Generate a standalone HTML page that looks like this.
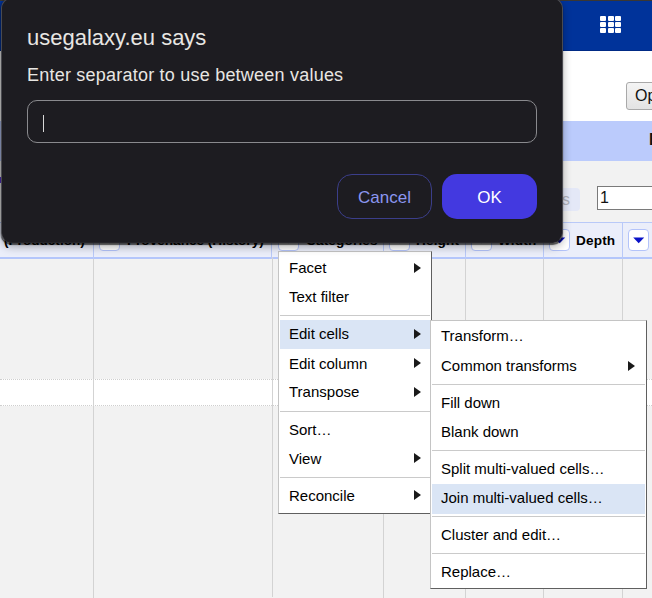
<!DOCTYPE html>
<html><head><meta charset="utf-8">
<style>
*{margin:0;padding:0;box-sizing:border-box}
html,body{width:652px;height:598px;overflow:hidden;background:#f2f2f2;font-family:"Liberation Sans",sans-serif;position:relative}
.a{position:absolute;white-space:nowrap}
#topline{left:0;top:0;width:652px;height:1px;background:#3a3733}
#nav{left:0;top:1px;width:652px;height:50px;background:#00339a;border-bottom:1px solid #002a85}
#white{left:0;top:51px;width:652px;height:70px;background:#fff}
#band{left:0;top:121px;width:652px;height:40px;background:#bbcbfc}
#grey{left:0;top:161px;width:652px;height:61px;background:#f2f2f2}
.gsq{position:absolute;width:6px;height:5px;background:#fff;border-radius:1px}
#opbtn{left:626px;top:82px;width:60px;height:28px;border:1px solid #a9a9a9;border-radius:3px;background:linear-gradient(#f4f4f4,#e3e3e3);font-size:16px;line-height:26px;padding-left:8px;color:#111}
#badge{left:540px;top:188px;width:40px;height:23px;background:#e4e8f7;border-radius:4px;color:#b0b3bd;font-size:16px;line-height:23px;padding-left:22px}
#num{left:597px;top:186px;width:80px;height:24px;background:#fff;border:1px solid #7a7a7a;font-size:16px;line-height:22px;padding-left:2px;color:#111}
#hdr{left:0;top:222px;width:652px;height:37px;background:#ebeefa;border-top:1px solid #b9c9f8;border-bottom:2px solid #b4c6fb}
.hcol{position:absolute;top:222px;width:1px;height:37px;background:#b9c9f8}
.bcol{position:absolute;top:259px;width:1px;height:340px;background:#d3d3d3}
.cb{position:absolute;top:229px;width:21px;height:22px;background:#fff;border:1.5px solid #b3c3fa;border-radius:4px}
.cb svg{position:absolute;left:3.5px;top:6px;width:12px;height:8px}
.ht{position:absolute;top:234px;font-size:13.6px;font-weight:bold;line-height:14px;color:#000;letter-spacing:0.15px}
#wrow{left:0;top:379px;width:652px;height:27px;background:#fff;border-top:1px dotted #cfcfcf;border-bottom:1px dotted #cfcfcf}
.menu{position:absolute;background:#fff;border:1px solid #c4c4c4;border-right-color:#5f5f5f;border-bottom-color:#5f5f5f}
.mi{position:absolute;font-size:15px;line-height:15px;color:#000}
.sep{position:absolute;height:1px;background:#cacaca}
.hl{position:absolute;background:#dae5f5}
.arr{position:absolute;width:0;height:0;border-top:5.5px solid transparent;border-bottom:5.5px solid transparent;border-left:7px solid #1a1a1a}
#shadow{left:1px;top:-2px;width:562px;height:245px;border-radius:10px;box-shadow:0 2px 1px rgba(0,0,0,.6),0 4px 9px rgba(0,0,0,.3),-1px 0 2px rgba(0,0,0,.3)}
#dlg{left:1px;top:-2px;width:562px;height:245px;background:#1d1c21;border:1px solid #4a4a50;border-bottom-color:#26252a;border-radius:10px}
.dt{position:absolute;color:#e8e6e3}
#inp{left:27px;top:100px;width:510px;height:43px;border:1.5px solid #8a8a8e;border-radius:10px}
#caret{left:43.2px;top:115px;width:1.3px;height:17px;background:#d8d8d8}
#cancel{left:337px;top:174px;width:95px;height:45px;border:1px solid #3b3e8a;border-radius:15px;color:#8b96f0;font-size:17px;text-align:center;line-height:45px}
#ok{left:442px;top:174px;width:95px;height:45px;background:#4339e0;border-radius:15px;color:#fff;font-size:17px;text-align:center;line-height:47px}
</style></head><body>
<div class="a" id="topline"></div>
<div class="a" id="nav">
  <div class="gsq" style="left:600px;top:15px"></div><div class="gsq" style="left:608px;top:15px"></div><div class="gsq" style="left:615px;top:15px"></div>
  <div class="gsq" style="left:600px;top:21px"></div><div class="gsq" style="left:608px;top:21px"></div><div class="gsq" style="left:615px;top:21px"></div>
  <div class="gsq" style="left:600px;top:27px"></div><div class="gsq" style="left:608px;top:27px"></div><div class="gsq" style="left:615px;top:27px"></div>
</div>
<div class="a" id="white"></div>
<div class="a" id="opbtn">Options</div>
<div class="a" id="band"><span style="position:absolute;left:649px;top:10px;font-weight:bold;font-size:16px;color:#111">E</span></div>
<div class="a" id="grey"></div>
<div class="a" style="left:0;top:177px;width:2px;height:6px;background:#5b35d5"></div>
<div class="a" id="badge">s</div>
<div class="a" id="num">1</div>

<div class="a" id="hdr"></div>
<div class="hcol" style="left:93px"></div>
<div class="hcol" style="left:271px"></div>
<div class="hcol" style="left:383px"></div>
<div class="hcol" style="left:465px"></div>
<div class="hcol" style="left:543px"></div>
<div class="hcol" style="left:622px"></div>
<div class="cb" style="left:99px"><svg viewBox="0 0 12 8"><path d="M0.2 1.6 L11.2 1.6 L5.7 7.3 Z" fill="#0a12c8"/></svg></div>
<div class="cb" style="left:278px"><svg viewBox="0 0 12 8"><path d="M0.2 1.6 L11.2 1.6 L5.7 7.3 Z" fill="#0a12c8"/></svg></div>
<div class="cb" style="left:389px"><svg viewBox="0 0 12 8"><path d="M0.2 1.6 L11.2 1.6 L5.7 7.3 Z" fill="#0a12c8"/></svg></div>
<div class="cb" style="left:471px"><svg viewBox="0 0 12 8"><path d="M0.2 1.6 L11.2 1.6 L5.7 7.3 Z" fill="#0a12c8"/></svg></div>
<div class="cb" style="left:549px"><svg viewBox="0 0 12 8"><path d="M0.2 1.6 L11.2 1.6 L5.7 7.3 Z" fill="#0a12c8"/></svg></div>
<div class="cb" style="left:628px"><svg viewBox="0 0 12 8"><path d="M0.2 1.6 L11.2 1.6 L5.7 7.3 Z" fill="#0a12c8"/></svg></div>
<div class="ht" style="left:4px;letter-spacing:0">(Production)</div>
<div class="ht" style="left:127px;letter-spacing:0">Provenance (History)</div>
<div class="ht" style="left:306px">Categories</div>
<div class="ht" style="left:416px">Height</div>
<div class="ht" style="left:498px">Width</div>
<div class="ht" style="left:576px">Depth</div>

<div class="a" id="wrow"></div>
<div class="bcol" style="left:93px"></div>
<div class="bcol" style="left:272px;top:257px"></div>
<div class="bcol" style="left:383px"></div>
<div class="bcol" style="left:465px"></div>
<div class="bcol" style="left:543px"></div>
<div class="bcol" style="left:622px"></div>

<!-- menu 1 -->
<div class="menu" style="left:278px;top:251px;width:154px;height:263px"></div>
<div class="hl" style="left:280px;top:320px;width:150px;height:29px"></div>
<div class="sep" style="left:280px;top:315px;width:150px"></div>
<div class="sep" style="left:280px;top:411px;width:150px"></div>
<div class="sep" style="left:280px;top:477px;width:150px"></div>
<div class="mi" style="left:289px;top:260px">Facet</div>
<div class="mi" style="left:289px;top:289px">Text filter</div>
<div class="mi" style="left:289px;top:326px">Edit cells</div>
<div class="mi" style="left:289px;top:356px">Edit column</div>
<div class="mi" style="left:289px;top:384px">Transpose</div>
<div class="mi" style="left:289px;top:422px">Sort…</div>
<div class="mi" style="left:289px;top:451px">View</div>
<div class="mi" style="left:289px;top:488px">Reconcile</div>
<div class="arr" style="left:414px;top:263px"></div>
<div class="arr" style="left:414px;top:329px"></div>
<div class="arr" style="left:414px;top:358px"></div>
<div class="arr" style="left:414px;top:387px"></div>
<div class="arr" style="left:414px;top:453px"></div>
<div class="arr" style="left:414px;top:490px"></div>

<!-- submenu -->
<div class="menu" style="left:430px;top:320px;width:217px;height:269px"></div>
<div class="hl" style="left:432px;top:484px;width:213px;height:30px"></div>
<div class="sep" style="left:432px;top:384px;width:213px"></div>
<div class="sep" style="left:432px;top:450px;width:213px"></div>
<div class="sep" style="left:432px;top:516px;width:213px"></div>
<div class="sep" style="left:432px;top:553px;width:213px"></div>
<div class="mi" style="left:441px;top:328px">Transform…</div>
<div class="mi" style="left:441px;top:358px">Common transforms</div>
<div class="mi" style="left:441px;top:395px">Fill down</div>
<div class="mi" style="left:441px;top:424px">Blank down</div>
<div class="mi" style="left:441px;top:461px">Split multi-valued cells…</div>
<div class="mi" style="left:441px;top:490px">Join multi-valued cells…</div>
<div class="mi" style="left:441px;top:527px">Cluster and edit…</div>
<div class="mi" style="left:441px;top:564px">Replace…</div>
<div class="arr" style="left:628px;top:361px"></div>

<!-- dialog -->
<div class="a" id="shadow"></div>
<div class="a" id="dlg"></div>
<div class="dt a" style="left:27px;top:27px;font-size:22px;line-height:22px">usegalaxy.eu says</div>
<div class="dt a" style="left:27px;top:66px;font-size:18px;line-height:18px;letter-spacing:0.22px">Enter separator to use between values</div>
<div class="a" id="inp"></div>
<div class="a" id="caret"></div>
<div class="a" id="cancel">Cancel</div>
<div class="a" id="ok">OK</div>
</body></html>
